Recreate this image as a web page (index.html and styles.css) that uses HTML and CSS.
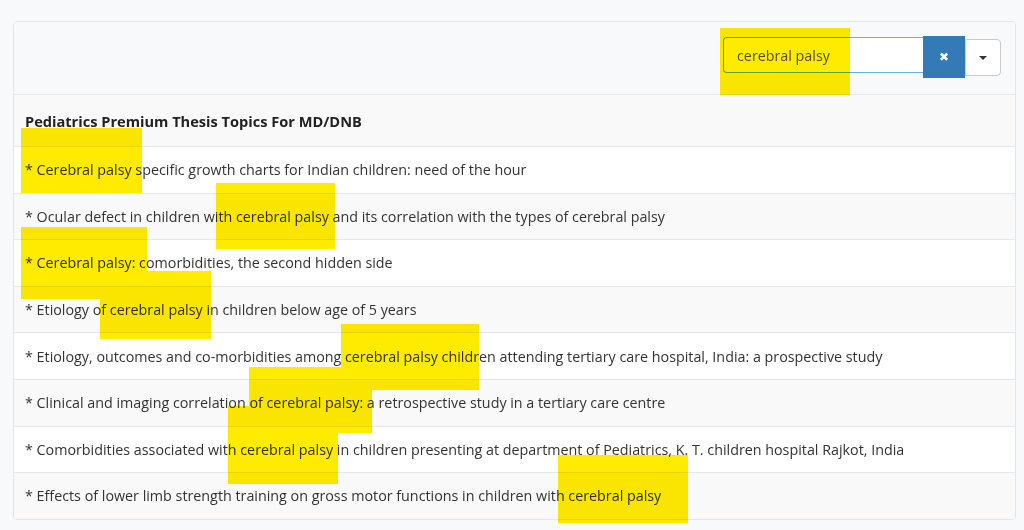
FILE: index.html
```html
<!DOCTYPE html>
<html lang="en">
<head>
    <meta charset="UTF-8">
    <meta name="viewport" content="width=device-width, initial-scale=1.0">
    <title>Pediatrics Premium Thesis Topics</title>
    <link rel="stylesheet" href="styles.css">
</head>
<body>

    <div class="panel">
        <div class="panel-head">
            <div class="search">
                <input class="search-input" type="text" value="cerebral palsy">
                <button class="btn-clear">&#10006;</button>
                <button class="btn-drop"><span class="caret"></span></button>
            </div>
        </div>
        <table class="topics">
            <tr class="title-row"><td>Pediatrics Premium Thesis Topics For MD/DNB</td></tr>
            <tr><td>* Cerebral palsy specific growth charts for Indian children: need of the hour</td></tr>
            <tr><td>* Ocular defect in children with cerebral palsy and its correlation with the types of cerebral palsy</td></tr>
            <tr><td>* Cerebral palsy: comorbidities, the second hidden side</td></tr>
            <tr><td>* Etiology of cerebral palsy in children below age of 5 years</td></tr>
            <tr><td>* Etiology, outcomes and co-morbidities among cerebral palsy children attending tertiary care hospital, India: a prospective study</td></tr>
            <tr><td>* Clinical and imaging correlation of cerebral palsy: a retrospective study in a tertiary care centre</td></tr>
            <tr><td>* Comorbidities associated with cerebral palsy in children presenting at department of Pediatrics, K. T. children hospital Rajkot, India</td></tr>
            <tr><td>* Effects of lower limb strength training on gross motor functions in children with cerebral palsy</td></tr>
        </table>
    </div>

    <!-- marker strokes drawn over the screenshot -->
    <div class="marks">
        <div class="mark" style="left:720px; top:28px; width:130px; height:67px;"></div>
        <div class="mark" style="left:21px; top:128px; width:121px; height:65px;"></div>
        <div class="mark" style="left:216px; top:183px; width:119px; height:66px;"></div>
        <div class="mark" style="left:21px; top:227px; width:126px; height:72px;"></div>
        <div class="mark" style="left:100px; top:271px; width:111px; height:68px;"></div>
        <div class="mark" style="left:341px; top:324px; width:138px; height:66px;"></div>
        <div class="mark" style="left:249px; top:367px; width:123px; height:66px;"></div>
        <div class="mark" style="left:228px; top:406px; width:110px; height:78px;"></div>
        <div class="mark" style="left:558px; top:455px; width:130px; height:68px;"></div>
    </div>

</body>
</html>
```

FILE: styles.css
```css
body {
    font-family: "Open Sans", "Noto Sans", sans-serif;
    background-color: #f8f9fa;
    color: #333;
    margin: 0;
    padding: 21px 8px 0 13px;
}
.panel {
    background-color: #fff;
    border: 1px solid #e3e6e9;
    border-radius: 4px;
    overflow: hidden;
}
.panel-head {
    background-color: #f8f9fa;
    border-bottom: 1px solid #e6e8ea;
    height: 72px;
    display: flex;
    justify-content: flex-end;
    align-items: flex-start;
    padding-right: 14px;
}
.search {
    display: flex;
    align-items: flex-start;
    margin-top: 14px;
}
.search-input {
    width: 200px;
    height: 36px;
    box-sizing: border-box;
    border: 1px solid #66afe9;
    border-right: none;
    border-radius: 4px 0 0 4px;
    padding: 0 13px;
    font-family: inherit;
    font-size: 14.3px;
    color: #555;
    background: #fff;
    outline: none;
    margin-top: 1px;
}
.btn-clear {
    width: 42px;
    height: 42px;
    background-color: #337ab7;
    border: none;
    color: #fff;
    font-size: 12px;
    padding: 0;
}
.btn-drop {
    width: 36px;
    height: 37px;
    margin-top: 3px;
    background-color: #fff;
    border: 1px solid #ccc;
    border-radius: 0 4px 4px 0;
    padding: 0;
}
.caret {
    display: inline-block;
    width: 0;
    height: 0;
    border-top: 4px solid #333;
    border-left: 4px solid transparent;
    border-right: 4px solid transparent;
    vertical-align: middle;
}
.topics {
    width: 100%;
    border-collapse: collapse;
    font-size: 14.3px;
}
.topics td {
    padding: 0 12px 0 11px;
    height: 45.6px;
    border-top: 1px solid #e6e8ea;
}
.topics tr:nth-child(odd) td {
    background-color: #f9f9f9;
}
.topics .title-row td {
    height: 51px;
    border-top: none;
    font-size: 14.6px;
    font-weight: bold;
    color: #222;
}
.marks {
    position: absolute;
    left: 0;
    top: 0;
    width: 100%;
    height: 100%;
    mix-blend-mode: multiply;
    pointer-events: none;
}
.mark {
    position: absolute;
    background-color: #ffeb00;
}
```
